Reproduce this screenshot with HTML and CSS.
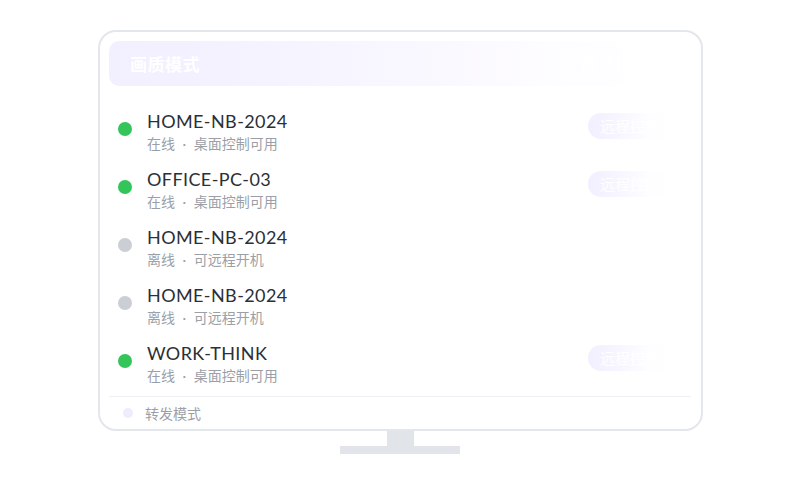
FILE: index.html
```html
<!DOCTYPE html>
<html lang="zh">
<head>
<meta charset="utf-8">
<link rel="stylesheet" href="styles.css">
</head>
<body>
<div class="stage">
  <div class="monitor">
    <div class="screen">
      <div class="header">
        <span class="title">画质模式</span>
        <span class="title-right">高清模式</span>
      </div>
      <ul class="list">
        <li class="row">
          <span class="dot on"></span>
          <div class="info"><div class="name">HOME-NB-2024</div><div class="sub">在线 · 桌面控制可用</div></div>
          <span class="btn">远程控制</span>
        </li>
        <li class="row">
          <span class="dot on"></span>
          <div class="info"><div class="name">OFFICE-PC-03</div><div class="sub">在线 · 桌面控制可用</div></div>
          <span class="btn">远程控制</span>
        </li>
        <li class="row">
          <span class="dot off"></span>
          <div class="info"><div class="name">HOME-NB-2024</div><div class="sub">离线 · 可远程开机</div></div>
        </li>
        <li class="row">
          <span class="dot off"></span>
          <div class="info"><div class="name">HOME-NB-2024</div><div class="sub">离线 · 可远程开机</div></div>
        </li>
        <li class="row">
          <span class="dot on"></span>
          <div class="info"><div class="name">WORK-THINK</div><div class="sub">在线 · 桌面控制可用</div></div>
          <span class="btn">远程控制</span>
        </li>
      </ul>
      <div class="footer">
        <span class="fdot"></span>
        <span class="ftext">转发模式</span>
      </div>
      <div class="fade"></div>
    </div>
  </div>
  <div class="neck"></div>
  <div class="base"></div>
</div>
</body>
</html>
```
FILE: styles.css
```css
html, body {
  margin: 0;
  padding: 0;
  background: #ffffff;
}
body {
  width: 800px;
  height: 500px;
  overflow: hidden;
  font-family: Lato, "Noto Sans CJK SC", sans-serif;
}
.stage {
  padding-top: 30px;
  display: flex;
  flex-direction: column;
  align-items: center;
}
.monitor {
  width: 605px;
  height: 401px;
  box-sizing: border-box;
  border: 2px solid #e3e6eb;
  border-radius: 18px;
  background: #fff;
  margin-left: 1px;
}
.screen {
  position: relative;
  padding: 9px 9px 0 9px;
  height: 100%;
  box-sizing: border-box;
}
.header {
  height: 45px;
  border-radius: 10px;
  background: linear-gradient(90deg, #f2efff 0%, #f6f4ff 35%, #fdfcff 75%, #ffffff 100%);
  display: flex;
  align-items: center;
  justify-content: space-between;
  padding: 0 40px 0 21px;
  box-sizing: border-box;
  margin-right: 2px;
  border-right: 1px solid #f0f0f4;
}
.title {
  color: #ffffff;
  font-family: "Noto Sans CJK SC", sans-serif;
  font-weight: 700;
  font-size: 17px;
  line-height: 24px;
  letter-spacing: 0.5px;
}
.title-right {
  color: #ffffff;
  font-family: "Noto Sans CJK SC", sans-serif;
  font-weight: 700;
  font-size: 17px;
}
.list {
  list-style: none;
  margin: 17px 0 0 0;
  padding: 0;
}
.row {
  height: 58px;
  display: flex;
  align-items: flex-start;
  padding: 7px 0 0 9px;
  box-sizing: border-box;
}
.dot {
  width: 14px;
  height: 14px;
  border-radius: 50%;
  margin-top: 12px;
  flex: none;
}
.dot.on { background: #33c45a; }
.dot.off { background: #cbced4; }
.info {
  margin-left: 15px;
  flex: 1;
}
.name {
  font-family: Lato, "Noto Sans CJK SC", sans-serif;
  font-weight: 400;
  font-size: 18px;
  line-height: 22px;
  color: #2b2f36;
  letter-spacing: 0.4px;
}
.sub {
  font-family: Lato, "Noto Sans CJK SC", sans-serif;
  font-size: 14px;
  line-height: 22px;
  margin-top: 1px;
  color: #9b9fa7;
  word-spacing: 4px;
}
.btn {
  margin-top: 3px;
  margin-right: 4px;
  height: 26px;
  width: 100px;
  border-radius: 13px;
  background: #f1eeff;
  color: #ffffff;
  font-family: "Noto Sans CJK SC", sans-serif;
  font-size: 15px;
  line-height: 26px;
  padding-left: 12px;
  box-sizing: border-box;
  flex: none;
}
.footer {
  margin-top: 3px;
  border-top: 1px solid #eef0f3;
  height: 31px;
  display: flex;
  align-items: center;
  padding-left: 14px;
  margin-right: 1px;
}
.fdot {
  width: 10px;
  height: 10px;
  border-radius: 50%;
  background: #efedfc;
}
.ftext {
  margin-left: 12px;
  font-family: "Noto Sans CJK SC", sans-serif;
  font-size: 14px;
  color: #9b9fa7;
}
.fade {
  position: absolute;
  top: 9px;
  right: 9px;
  width: 110px;
  bottom: 40px;
  background: linear-gradient(90deg, rgba(255,255,255,0) 0%, rgba(255,255,255,0.4) 30%, rgba(255,255,255,0.9) 60%, #ffffff 80%);
  pointer-events: none;
}
.neck {
  width: 27px;
  height: 15px;
  background: #e1e5ea;
}
.base {
  width: 120px;
  height: 8px;
  background: #e1e5ea;
}
```
